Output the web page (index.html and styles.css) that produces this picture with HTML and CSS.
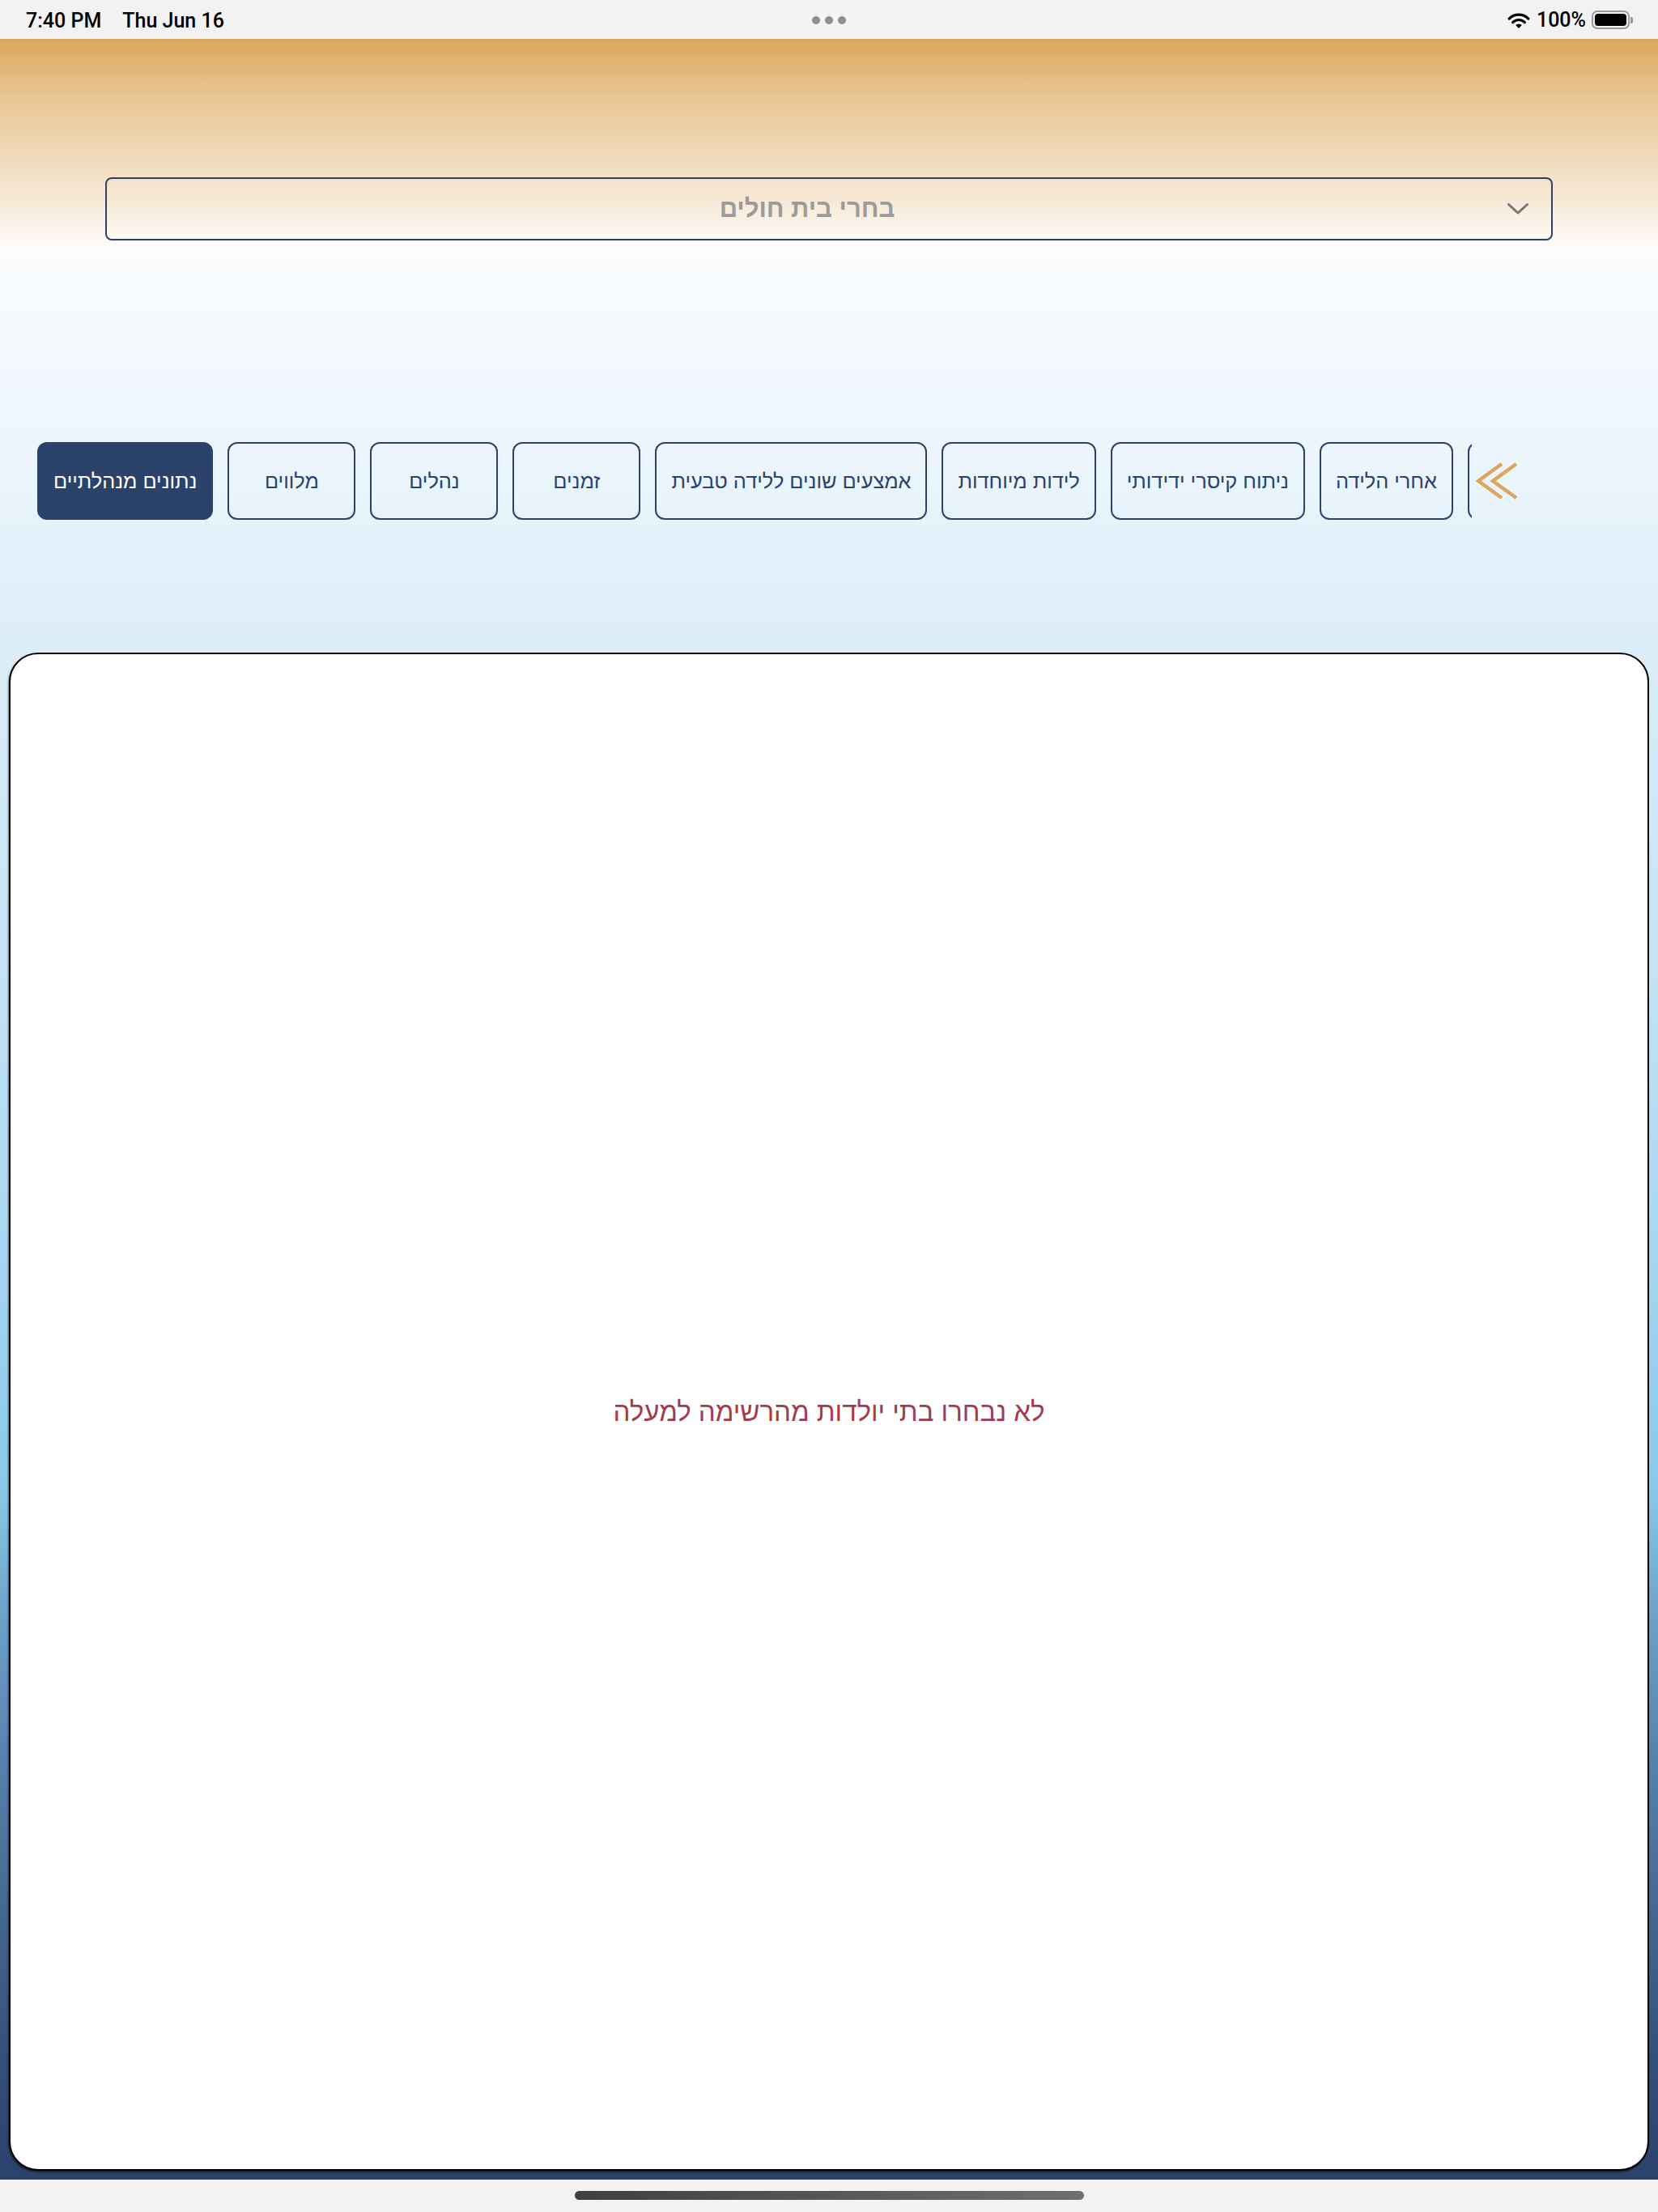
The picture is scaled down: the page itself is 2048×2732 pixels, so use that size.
FILE: index.html
```html
<!DOCTYPE html>
<html lang="he">
<head>
<meta charset="utf-8">
<title>בחרי בית חולים</title>
<link rel="stylesheet" href="styles.css">
</head>
<body>
<header class="status">
  <div class="status-left"><span>7:40 PM</span><span>Thu Jun 16</span></div>
  <div class="status-dots"><i></i><i></i><i></i></div>
  <div class="status-right">
    <svg class="wifi" viewBox="0 0 28 20" width="28" height="20">
      <path d="M14 20 L10.2 16.1 A5.4 5.4 0 0 1 17.8 16.1 Z" fill="#000"/>
      <path d="M6.6 12.6 A10.4 10.4 0 0 1 21.4 12.6" fill="none" stroke="#000" stroke-width="3.2" stroke-linecap="round"/>
      <path d="M2.2 8.1 A16.6 16.6 0 0 1 25.8 8.1" fill="none" stroke="#000" stroke-width="3.2" stroke-linecap="round"/>
    </svg>
    <span class="pct">100%</span>
    <span class="battery"><span class="battery-fill"></span></span><span class="battery-nub"></span>
  </div>
</header>

<main class="screen">
  <div class="select">
    <span class="select-text">בחרי בית חולים</span>
    <svg class="select-chevron" viewBox="0 0 26 14" width="26" height="14">
      <polyline points="1.5,1.5 13,12 24.5,1.5" fill="none" stroke="#777" stroke-width="3" stroke-linecap="round" stroke-linejoin="round"/>
    </svg>
  </div>

  <nav class="tabs-bar">
    <div class="tabs">
      <button class="tab">לפני הלידה</button>
      <button class="tab">אחרי הלידה</button>
      <button class="tab">ניתוח קיסרי ידידותי</button>
      <button class="tab">לידות מיוחדות</button>
      <button class="tab">אמצעים שונים ללידה טבעית</button>
      <button class="tab">זמנים</button>
      <button class="tab">נהלים</button>
      <button class="tab">מלווים</button>
      <button class="tab tab-active">נתונים מנהלתיים</button>
    </div>
    <div class="tabs-more">
      <svg viewBox="0 0 52 46" width="52" height="46">
        <polyline points="32,2 3,23 32,44" fill="none" stroke="#dca55c" stroke-width="4.5" stroke-linejoin="miter"/>
        <polyline points="50,2 21,23 50,44" fill="none" stroke="#dca55c" stroke-width="4.5" stroke-linejoin="miter"/>
      </svg>
    </div>
  </nav>

  <section class="card">
    <p class="empty">לא נבחרו בתי יולדות מהרשימה למעלה</p>
  </section>
</main>

<footer class="home-bar"><span class="home-indicator"></span></footer>
</body>
</html>
```

FILE: styles.css
```css
* { box-sizing: border-box; }

html, body {
  margin: 0;
  padding: 0;
}

body {
  width: 2048px;
  height: 2732px;
  background: #f2f2f2;
  font-family: "Liberation Sans", "DejaVu Sans", sans-serif;
  overflow: hidden;
}

/* status bar */
.status {
  height: 48px;
  background: #f2f2f2;
  display: flex;
  align-items: center;
  justify-content: space-between;
  padding: 0 31px 0 32px;
  position: relative;
  font-family: Roboto, "Liberation Sans", sans-serif;
  font-weight: 500;
  font-size: 25px;
  color: #000;
}

.status-left {
  display: flex;
  gap: 26px;
  padding-top: 2px;
}

.status-dots {
  position: absolute;
  left: 1003px;
  top: 20px;
  display: flex;
  gap: 6px;
}

.status-dots i {
  display: block;
  width: 10px;
  height: 10px;
  border-radius: 50%;
  background: #8e8e8e;
}

.status-right {
  display: flex;
  align-items: center;
  padding-top: 1px;
}

.wifi { display: block; margin-right: 8px; }

.pct { margin-right: 7px; }

.battery {
  width: 47px;
  height: 23px;
  border: 2px solid #9a9a9a;
  border-radius: 7px;
  padding: 2px;
  display: block;
}

.battery-fill {
  display: block;
  width: 100%;
  height: 100%;
  background: #000;
  border-radius: 4px;
}

.battery-nub {
  display: block;
  width: 3px;
  height: 8px;
  background: #9a9a9a;
  border-radius: 0 2px 2px 0;
  margin-left: 1px;
}

/* main gradient screen */
.screen {
  height: 2644px;
  display: flex;
  flex-direction: column;
  padding: 171px 11px 11px;
  background: linear-gradient(to bottom,
    #dca55c 0px,
    #e9c592 70px,
    #f1dbbb 150px,
    #f8ecdc 210px,
    #fefcf9 255px,
    #f7fbfe 300px,
    #ecf5fc 520px,
    #dbedf8 750px,
    #c4e3f5 1150px,
    #a6d6f0 1500px,
    #88c9eb 1790px,
    #6b9fc6 1960px,
    #5683ad 2120px,
    #426590 2330px,
    #334f7b 2500px,
    #2b426b 2644px);
}

.select {
  margin: 0 119px;
  height: 78px;
  border: 2px solid #2b426b;
  border-radius: 8px;
  display: flex;
  align-items: center;
  padding-right: 28px;
}

.select-text {
  flex: 1;
  text-align: center;
  direction: rtl;
  font-size: 31px;
  font-weight: 700;
  color: #9b9b9b;
}

.select-chevron { display: block; }

/* tabs */
.tabs-bar {
  margin: 249px -11px 0;
  height: 96px;
  display: flex;
}

.tabs {
  flex: 1;
  min-width: 0;
  direction: rtl;
  display: flex;
  justify-content: flex-end;
  gap: 18px;
  padding-left: 46px;
  overflow: hidden;
}

.tab {
  flex: none;
  height: 96px;
  min-width: 158px;
  padding: 0 18px;
  border: 2px solid #2b426b;
  border-radius: 12px;
  background: transparent;
  color: #2b426b;
  font-family: "Liberation Sans", "DejaVu Sans", sans-serif;
  font-size: 25.3px;
  white-space: nowrap;
}

.tab-active {
  background: #2b426b;
  color: #fff;
}

.tabs-more {
  flex: none;
  width: 230px;
  padding-left: 5px;
  display: flex;
  align-items: center;
}

.tabs-more svg { display: block; }

/* card */
.card {
  flex: 1;
  margin-top: 164px;
  background: #fff;
  border: 2px solid #000;
  border-radius: 36px;
  box-shadow: -1px 2px 2px rgba(0,0,0,0.5);
  display: flex;
  align-items: center;
  justify-content: center;
}

.empty {
  margin: 0;
  direction: rtl;
  font-size: 33px;
  color: #a23b4d;
}

/* home indicator */
.home-bar {
  height: 40px;
  display: flex;
  justify-content: center;
  padding-top: 14px;
}

.home-indicator {
  display: block;
  width: 629px;
  height: 11px;
  border-radius: 6px;
  background: linear-gradient(to right, #3f3f3f, #6f6f6f);
}
```
